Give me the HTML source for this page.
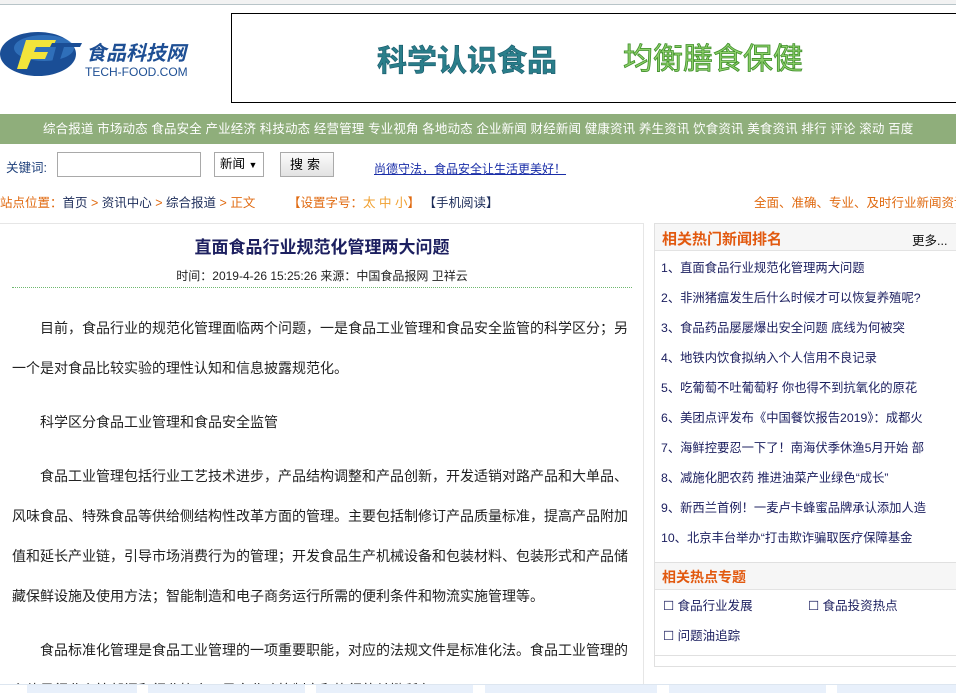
<!DOCTYPE html>
<html><head><meta charset="utf-8"><style>
*{margin:0;padding:0;box-sizing:border-box}
body{width:956px;height:693px;overflow:hidden;background:#fff;font-family:"Liberation Sans","Noto Sans CJK SC","WenQuanYi Zen Hei",sans-serif;font-size:12px;color:#000;position:relative}
.a{position:absolute}
a{color:inherit;text-decoration:none}
</style></head><body>
<div class="a" style="left:0;top:0;width:956px;height:5px;background:#f2f2f2;border-bottom:1px solid #b8c4c8"></div>
<!-- logo -->
<svg class="a" style="left:0;top:26px" width="220" height="55" viewBox="0 0 220 55">
<ellipse cx="38" cy="28" rx="38" ry="22" fill="#1a4e96"/>
<ellipse cx="44" cy="22" rx="30" ry="13" fill="#3d86d0" opacity=".6"/>
<path d="M26 14 H56 L53 21 H36 L34 26 H48 L45 33 H31 L27 43 H17 Z" fill="#f2e43a"/>
<path d="M52 17 H82 L80 21 H64 L58 40 H51 L56 21 H50 Z" fill="#1a4e96"/>
<text x="86" y="34" font-size="20" font-weight="bold" font-style="italic" fill="#1e4f94" font-family="Noto Sans CJK SC,sans-serif" textLength="100">食品科技网</text>
<text x="85" y="50" font-size="12" fill="#1e4f94" font-family="Liberation Sans,sans-serif">TECH-FOOD.COM</text>
</svg>
<div class="a" style="left:231px;top:13px;width:740px;height:90px;border:1px solid #000;border-right:none"></div>
<div class="a" style="left:377px;top:38px;font-size:30px;font-weight:bold;color:#2a7e8a;-webkit-text-stroke:0.6px #17586a;font-family:'Noto Sans CJK SC',sans-serif;line-height:40px">科学认识食品</div>
<div class="a" style="left:623px;top:36px;font-size:30px;color:#8ccf6a;-webkit-text-stroke:0.8px #3f8f2a;font-family:'Noto Sans CJK SC',sans-serif;line-height:40px">均衡膳食保健</div>
<!-- nav -->
<div class="a" style="left:0;top:114px;width:956px;height:30px;background:#8fae7b;color:#fff;font-size:12.5px;line-height:30px;padding-left:43px;white-space:nowrap;letter-spacing:0.14px">综合报道 市场动态 食品安全 产业经济 科技动态 经营管理 专业视角 各地动态 企业新闻 财经新闻 健康资讯 养生资讯 饮食资讯 美食资讯 排行 评论 滚动 百度</div>
<!-- search -->
<div class="a" style="left:6px;top:157px;font-size:12.5px;color:#1d3f7a">关键词:</div>
<div class="a" style="left:57px;top:152px;width:144px;height:25px;border:1px solid #a9a9a9"></div>
<div class="a" style="left:214px;top:152px;width:50px;height:25px;border:1px solid #a9a9a9;font-size:12.5px;line-height:23px;padding-left:5px">新闻 <span style="font-size:9px">▼</span></div>
<div class="a" style="left:280px;top:152px;width:54px;height:25px;border:1px solid #aaa;background:linear-gradient(#fbfbfb,#e2e2e2);font-size:13px;line-height:23px;text-align:center;letter-spacing:4px">搜索</div>
<div class="a" style="left:374px;top:160px;font-size:12px;color:#1a2ea8;text-decoration:underline">尚德守法，食品安全让生活更美好！</div>
<!-- breadcrumb -->
<div class="a" style="left:0;top:192px;font-size:12.5px;white-space:nowrap;color:#1d2d5a"><span style="color:#e06a10">站点位置：</span>首页 <span style="color:#e06a10">&gt;</span> 资讯中心 <span style="color:#e06a10">&gt;</span> 综合报道 <span style="color:#e06a10">&gt;</span> <span style="color:#e06a10">正文</span></div>
<div class="a" style="left:288px;top:192px;font-size:12.5px;white-space:nowrap;color:#e06a10">【设置字号：<span style="color:#f0a030">太 中 小</span>】 <span style="color:#1d2d5a">【手机阅读】</span></div>
<div class="a" style="left:754px;top:192px;font-size:12.5px;white-space:nowrap;color:#e06a10">全面、准确、专业、及时行业新闻资讯</div>
<!-- article -->
<div class="a" style="left:0;top:223px;width:644px;height:470px;border:1px solid #e6e6e6;border-left:none"></div>
<div class="a" style="left:0;top:233px;width:644px;text-align:center;font-size:17px;font-weight:bold;color:#1d2060">直面食品行业规范化管理两大问题</div>
<div class="a" style="left:0;top:267px;width:644px;text-align:center;font-size:12px;color:#222">时间：2019-4-26 15:25:26 来源：中国食品报网 卫祥云</div>
<div class="a" style="left:12px;top:287px;width:620px;border-top:1px dotted #6fb86f"></div>
<div class="a" style="left:12px;top:308px;width:620px;height:376px;overflow:hidden;font-size:14px;line-height:40px;color:#222">
<p style="text-indent:28px">目前，食品行业的规范化管理面临两个问题，一是食品工业管理和食品安全监管的科学区分；另一个是对食品比较实验的理性认知和信息披露规范化。</p>
<p style="text-indent:28px;margin-top:14px">科学区分食品工业管理和食品安全监管</p>
<p style="text-indent:28px;margin-top:14px">食品工业管理包括行业工艺技术进步，产品结构调整和产品创新，开发适销对路产品和大单品、风味食品、特殊食品等供给侧结构性改革方面的管理。主要包括制修订产品质量标准，提高产品附加值和延长产业链，引导市场消费行为的管理；开发食品生产机械设备和包装材料、包装形式和产品储藏保鲜设施及使用方法；智能制造和电子商务运行所需的便利条件和物流实施管理等。</p>
<p style="text-indent:28px;margin-top:14px">食品标准化管理是食品工业管理的一项重要职能，对应的法规文件是标准化法。食品工业管理的主体是行业主管部门和行业协会，是产业政策制定和执行的关键所在。</p>
</div>
<!-- sidebar -->
<div class="a" style="left:654px;top:223px;width:310px;height:433px;border:1px solid #e0e0e0"></div>
<div class="a" style="left:655px;top:224px;width:301px;height:27px;background:#f6f6f6;border-bottom:1px solid #e3e3e3"></div>
<div class="a" style="left:662px;top:228px;font-size:15px;font-weight:bold;color:#e2590f">相关热门新闻排名</div>
<div class="a" style="left:912px;top:230px;font-size:12.5px;color:#111">更多...</div>
<div class="a" style="left:661px;top:253px;font-size:12.3px;line-height:30px;color:#1d2060;white-space:nowrap;width:295px;overflow:hidden">
1、直面食品行业规范化管理两大问题<br>2、非洲猪瘟发生后什么时候才可以恢复养殖呢?<br>3、食品药品屡屡爆出安全问题 底线为何被突<br>4、地铁内饮食拟纳入个人信用不良记录<br>5、吃葡萄不吐葡萄籽 你也得不到抗氧化的原花<br>6、美团点评发布《中国餐饮报告2019》：成都火<br>7、海鲜控要忍一下了！南海伏季休渔5月开始 部<br>8、减施化肥农药 推进油菜产业绿色“成长”<br>9、新西兰首例！一麦卢卡蜂蜜品牌承认添加人造<br>10、北京丰台举办“打击欺诈骗取医疗保障基金</div>
<div class="a" style="left:654px;top:562px;width:310px;height:105px;border:1px solid #e0e0e0"></div>
<div class="a" style="left:655px;top:563px;width:301px;height:27px;background:#f6f6f6;border-bottom:1px solid #e3e3e3"></div>
<div class="a" style="left:662px;top:567px;font-size:14px;font-weight:bold;color:#e2590f">相关热点专题</div>
<div class="a" style="left:663px;top:591px;font-size:12.5px;line-height:30px;color:#1d2060;white-space:nowrap">
<span style="display:inline-block;width:145px">☐ 食品行业发展</span>☐ 食品投资热点<br>☐ 问题油追踪</div>
<!-- bottom bar -->
<div class="a" style="left:0;top:684px;width:956px;height:9px;background:#fff;border-top:1px solid #dde6f0"></div>
<div class="a" style="left:27px;top:685px;width:110px;height:8px;background:#e8f0fb"></div>
<div class="a" style="left:148px;top:685px;width:157px;height:8px;background:#e8f0fb"></div>
<div class="a" style="left:316px;top:685px;width:157px;height:8px;background:#e8f0fb"></div>
<div class="a" style="left:485px;top:685px;width:172px;height:8px;background:#e8f0fb"></div>
<div class="a" style="left:669px;top:685px;width:157px;height:8px;background:#e8f0fb"></div>
<div class="a" style="left:837px;top:685px;width:119px;height:8px;background:#e8f0fb"></div>
</body></html>
